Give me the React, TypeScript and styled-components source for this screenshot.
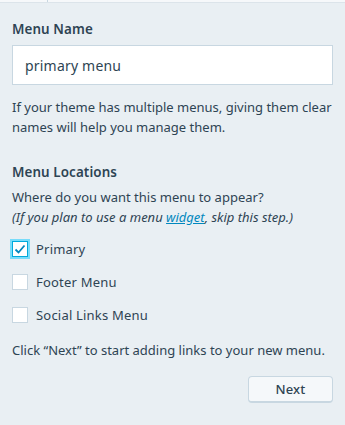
import React, { useState } from "react";
import styled, { createGlobalStyle } from "styled-components";

const GlobalStyle = createGlobalStyle`
  html, body {
    margin: 0;
    padding: 0;
    background: #e9eff3;
  }
  body {
    font-family: "Noto Sans", "Open Sans", sans-serif;
    color: #2e4453;
  }
`;

const TopStrip = styled.div`
  display: flex;
  height: 2px;
  background: #f6f8fa;
  border-bottom: 1px solid #dce4ea;

  & > span {
    width: 47px;
    border-right: 1px solid #c8d7e1;
  }
`;

const Panel = styled.div`
  display: flex;
  flex-direction: column;
  padding: 16px 12px 0 12px;
`;

const Heading = styled.h3<{ $top?: number; $bottom?: number }>`
  margin: ${p => p.$top ?? 0}px 0 ${p => p.$bottom ?? 6}px 0;
  font-size: 13.4px;
  font-weight: 600;
  line-height: 20px;
  letter-spacing: 0.1px;
`;

const TextInput = styled.input`
  box-sizing: border-box;
  width: 100%;
  height: 40px;
  padding: 0 12px;
  border: 1px solid #c8d7e1;
  background: #fff;
  font-family: inherit;
  font-size: 14px;
  letter-spacing: 0.2px;
  color: #2e4453;
  outline: none;
`;

const Help = styled.p<{ $top?: number }>`
  margin: ${p => p.$top ?? 0}px 0 0 0;
  font-size: 13px;
  line-height: 20px;
  color: #2e4453;

  & em a {
    color: #0087be;
  }
`;

const Options = styled.div`
  display: flex;
  flex-direction: column;
  gap: 17px;
  margin-top: 14px;
`;

const OptionRow = styled.label`
  display: flex;
  align-items: center;
  gap: 8px;
  height: 16px;
  font-size: 13px;
  letter-spacing: 0.2px;
  cursor: pointer;
`;

const Box = styled.span<{ $checked: boolean }>`
  box-sizing: border-box;
  width: 16px;
  height: 16px;
  display: flex;
  align-items: center;
  justify-content: center;
  background: #fff;
  border: 1px solid ${p => (p.$checked ? "#00aadc" : "#c8d7e1")};
  box-shadow: ${p => (p.$checked ? "0 0 0 2px #78dcfa" : "none")};
  flex-shrink: 0;
`;

const Footer = styled.div`
  display: flex;
  justify-content: flex-end;
  margin-top: 16px;
`;

const Button = styled.button`
  box-sizing: border-box;
  width: 85px;
  height: 27px;
  background: #f5f8fa;
  border: 1px solid #c8d7e1;
  border-bottom-width: 2px;
  border-radius: 4px;
  font-family: inherit;
  font-size: 13px;
  font-weight: 500;
  letter-spacing: 0.2px;
  color: #2e4453;
  cursor: pointer;
`;

const Check = () => (
  <svg width="12" height="12" viewBox="0 0 24 24">
    <path d="M3 13 L9 19 L21 5" fill="none" stroke="#0087be" strokeWidth="3.6" />
  </svg>
);

const Option: React.FC<{ label: string; checked: boolean; onToggle: () => void }> = ({
  label,
  checked,
  onToggle,
}) => (
  <OptionRow onClick={onToggle}>
    <Box $checked={checked}>{checked && <Check />}</Box>
    {label}
  </OptionRow>
);

const locations = ["Primary", "Footer Menu", "Social Links Menu"];

export default function App() {
  const [name, setName] = useState("primary menu");
  const [picked, setPicked] = useState<Record<string, boolean>>({ Primary: true });

  return (
    <>
      <GlobalStyle />
      <TopStrip>
        <span />
      </TopStrip>
      <Panel>
        <Heading>Menu Name</Heading>
        <TextInput value={name} onChange={e => setName(e.target.value)} />
        <Help $top={12}>
          If your theme has multiple menus, giving them clear names will help you manage them.
        </Help>

        <Heading $top={25} $bottom={5}>
          Menu Locations
        </Heading>
        <Help>
          Where do you want this menu to appear?
          <br />
          <em>
            (If you plan to use a menu <a href="#">widget</a>, skip this step.)
          </em>
        </Help>

        <Options>
          {locations.map(l => (
            <Option
              key={l}
              label={l}
              checked={!!picked[l]}
              onToggle={() => setPicked(p => ({ ...p, [l]: !p[l] }))}
            />
          ))}
        </Options>

        <Help $top={17}>Click “Next” to start adding links to your new menu.</Help>

        <Footer>
          <Button>Next</Button>
        </Footer>
      </Panel>
    </>
  );
}
